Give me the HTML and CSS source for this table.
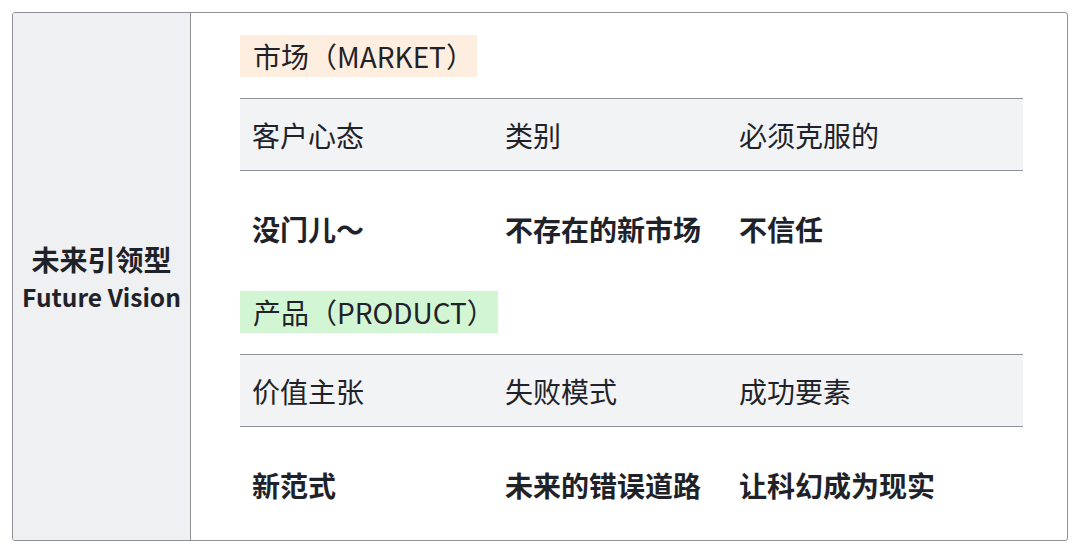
FILE: index.html
```html
<!DOCTYPE html>
<html lang="zh">
<head>
<meta charset="utf-8">
<link rel="stylesheet" href="styles.css">
</head>
<body>
<div class="card">
  <div class="side">
    <div class="side-title">
      <div class="side-zh">未来引领型</div>
      <div class="side-en">Future Vision</div>
    </div>
  </div>
  <div class="main">
    <div class="label label-market">市场（MARKET）</div>
    <div class="grid">
      <div class="row head">
        <div class="cell">客户心态</div>
        <div class="cell">类别</div>
        <div class="cell">必须克服的</div>
      </div>
      <div class="row data">
        <div class="cell">没门儿～</div>
        <div class="cell">不存在的新市场</div>
        <div class="cell">不信任</div>
      </div>
    </div>
    <div class="label label-product">产品（PRODUCT）</div>
    <div class="grid">
      <div class="row head">
        <div class="cell">价值主张</div>
        <div class="cell">失败模式</div>
        <div class="cell">成功要素</div>
      </div>
      <div class="row data">
        <div class="cell">新范式</div>
        <div class="cell">未来的错误道路</div>
        <div class="cell">让科幻成为现实</div>
      </div>
    </div>
  </div>
</div>
</body>
</html>
```

FILE: styles.css
```css
html, body {
  margin: 0;
  padding: 0;
  background: #ffffff;
}
body {
  padding: 12px;
  font-family: "Noto Sans CJK SC", "Noto Sans", sans-serif;
  color: #1f2329;
}
.card {
  box-sizing: border-box;
  width: 1056px;
  height: 529px;
  border: 1px solid #8f8f94;
  border-radius: 3px;
  display: flex;
  overflow: hidden;
}
.side {
  box-sizing: border-box;
  width: 178px;
  flex: none;
  background: #eff0f2;
  border-right: 1px solid #8f8f94;
  display: flex;
  align-items: center;
  justify-content: center;
}
.side-title {
  font-weight: 700;
  text-align: center;
  white-space: nowrap;
  padding-top: 2px;
}
.side-zh {
  font-size: 28px;
  line-height: 38px;
}
.side-en {
  font-size: 24.5px;
  line-height: 38px;
}
.main {
  flex: 1;
  padding: 22px 44px 0 49px;
  display: flex;
  flex-direction: column;
  align-items: flex-start;
}
.label {
  height: 42px;
  line-height: 42px;
  font-size: 28px;
  padding: 0 3px 0 13px;
  margin-bottom: 21px;
}
.label-market { background: #fdeedf; }
.label-product { background: #d2f5d4; }
.grid {
  align-self: stretch;
}
.row {
  display: grid;
  grid-template-columns: 253px 234px 1fr;
  align-items: center;
}
.cell {
  padding-left: 12px;
  font-size: 28px;
  white-space: nowrap;
}
.head {
  box-sizing: border-box;
  height: 73px;
  background: #f2f3f5;
  border-top: 1px solid #8f959e;
  border-bottom: 1px solid #8f959e;
}
.data {
  height: 120px;
  padding-bottom: 4px;
  box-sizing: border-box;
}
.data .cell {
  font-weight: 700;
}
```
